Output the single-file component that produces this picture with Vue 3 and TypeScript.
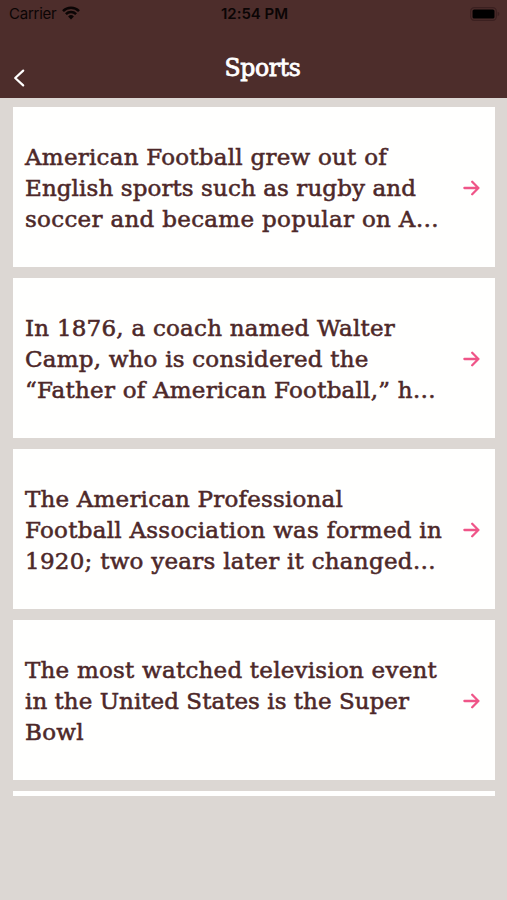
<script setup lang="ts">
interface Line {
  text: string
  width: number
}

const facts: Line[][] = [
  [
    { text: 'American Football grew out of', width: 362 },
    { text: 'English sports such as rugby and', width: 391 },
    { text: 'soccer and became popular on A…', width: 414 },
  ],
  [
    { text: 'In 1876, a coach named Walter', width: 370 },
    { text: 'Camp, who is considered the', width: 343.5 },
    { text: '“Father of American Football,” h…', width: 411 },
  ],
  [
    { text: 'The American Professional', width: 318 },
    { text: 'Football Association was formed in', width: 417 },
    { text: '1920; two years later it changed…', width: 411 },
  ],
  [
    { text: 'The most watched television event', width: 412 },
    { text: 'in the United States is the Super', width: 384 },
    { text: 'Bowl', width: 59 },
  ],
]

// Tracks a line out or in so that it sets to the given measure.
const vFit = {
  mounted(el: HTMLElement, binding: { value: number }) {
    const natural = el.getBoundingClientRect().width
    const count = (el.textContent ?? '').length
    el.style.letterSpacing = `${(binding.value - natural) / count}px`
  },
}
</script>

<template>
  <div class="screen">
    <header class="header">
      <div class="status">
        <div class="carrier">
          <span v-fit="47.5">Carrier</span>
          <svg class="wifi" width="18" height="14" viewBox="0 0 18 14">
            <g fill="none" stroke="#0b0505" stroke-width="2.5">
              <path d="M1 5.1a11.3 11.3 0 0 1 16 0" />
              <path d="M3.9 8.2a7.2 7.2 0 0 1 10.2 0" />
            </g>
            <path d="M6.1 10.4a4.1 4.1 0 0 1 5.8 0L9 13.5z" fill="#0b0505" />
          </svg>
        </div>
        <div class="clock"><span v-fit="67">12:54 PM</span></div>
        <div class="power">
          <svg width="30" height="14" viewBox="0 0 30 14">
            <rect x=".7" y=".7" width="25.6" height="12.6" rx="3.6" fill="none" stroke="#3b2020" stroke-width="1.2" />
            <rect x="2.5" y="2.4" width="22" height="9.2" rx="1.6" fill="#000" />
            <path d="M27.6 4.8q1.8.6 1.8 2.2t-1.8 2.2z" fill="#3b2020" />
          </svg>
        </div>
      </div>
      <div class="bar">
        <button class="back" aria-label="Back">
          <svg width="12" height="18" viewBox="0 0 12 18">
            <path d="M10.2 1.6 2.2 9l8 7.4" fill="none" stroke="#fff" stroke-width="2.2" stroke-linecap="round" stroke-linejoin="round" />
          </svg>
        </button>
        <h1 class="title"><span v-fit="76">Sports</span></h1>
      </div>
    </header>
    <main class="list">
      <article v-for="(fact, i) in facts" :key="i" class="card">
        <p class="fact">
          <span v-for="line in fact" :key="line.text" v-fit="line.width" class="line">{{ line.text }}</span>
        </p>
        <svg class="arrow" width="17" height="16" viewBox="0 0 17 16">
          <path d="M1.4 8h14M9.2 1.8 15.4 8l-6.2 6.2" fill="none" stroke="#ef5588" stroke-width="2.3" stroke-linecap="round" stroke-linejoin="round" />
        </svg>
      </article>
      <article class="card"></article>
    </main>
  </div>
</template>

<style>
body {
  background: #dcd7d3;
}
</style>

<style scoped>
.screen {
  height: 900px;
  overflow: hidden;
  background: #dcd7d3;
}
.header {
  height: 98px;
  background: #4d2d2b;
}
.status {
  display: grid;
  grid-template-columns: 1fr auto 1fr;
  align-items: center;
  height: 28px;
  padding: 0 7px 0 9px;
  font: 15px/28px Inter, sans-serif;
  color: #0b0505;
}
.carrier {
  display: flex;
  align-items: center;
  gap: 5px;
  white-space: nowrap;
}
.wifi {
  margin-top: -3px;
}
.clock {
  font-weight: 600;
  white-space: nowrap;
}
.power {
  display: flex;
  justify-content: flex-end;
  margin-top: -1px;
}
.bar {
  display: grid;
  grid-template-columns: 60px 1fr 42px;
  height: 70px;
}
.back {
  display: flex;
  padding: 41px 0 0 13px;
  border: 0;
  background: none;
}
.title {
  justify-self: center;
  margin: 24px 0 0;
  white-space: nowrap;
  font: 23.5px/32px "DejaVu Serif", serif;
  color: #fff;
  -webkit-text-stroke: 0.8px #fff;
}
.list {
  display: flex;
  flex-direction: column;
  gap: 11px;
  height: 689px;
  margin-top: 9px;
  padding: 0 12px 0 13px;
  overflow: hidden;
}
.card {
  flex: none;
  display: flex;
  align-items: center;
  justify-content: space-between;
  box-sizing: border-box;
  height: 160px;
  padding: 3px 15px 0 12px;
  background: #fffffe;
}
.fact {
  display: flex;
  flex-direction: column;
  align-items: flex-start;
  margin: 0;
  font: 23px/31.2px "DejaVu Serif", serif;
  color: #4d2829;
  -webkit-text-stroke: 0.55px #4d2829;
}
.line {
  white-space: nowrap;
}
.arrow {
  flex: none;
  margin-bottom: 2px;
}
</style>
